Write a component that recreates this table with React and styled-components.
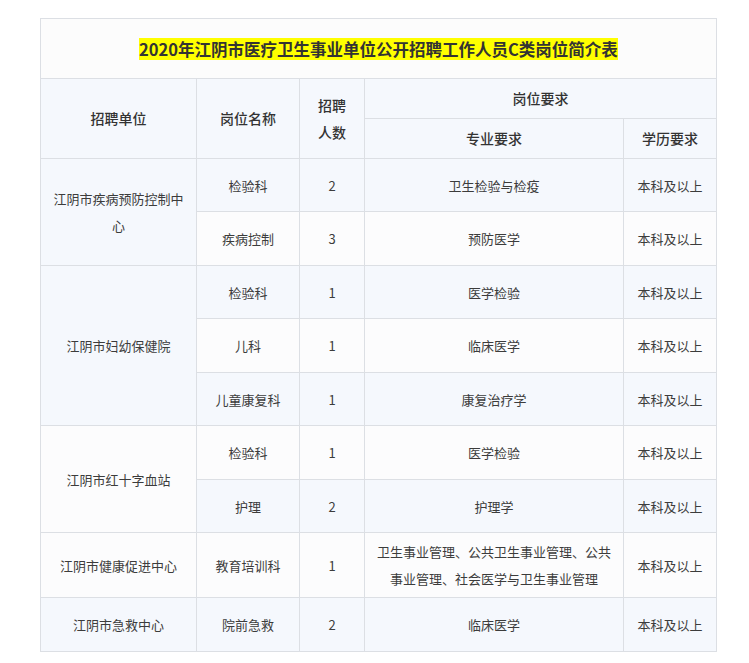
import styled, { createGlobalStyle } from "styled-components";

const GlobalStyle = createGlobalStyle`
  body {
    margin: 0;
    background: #ffffff;
    font-family: "Noto Sans CJK SC", "Noto Sans", sans-serif;
  }
`;

const Page = styled.div`
  padding: 18px 0 0 40px;
`;

const Table = styled.table`
  border-collapse: collapse;
  table-layout: fixed;
  width: 676px;
  border: 1px solid #dcdfe4;
`;

const Row = styled.tr`
  height: ${(p) => p.$h}px;
  background: ${(p) => (p.$blue ? "#f5f8fd" : "#fcfcfd")};
`;

const TitleCell = styled.td`
  height: 59px;
  padding: 0;
  text-align: center;
  background: #fcfcfc;
  border: 1px solid #dcdfe4;
`;

const Highlight = styled.span`
  background: #ffff00;
  color: #333333;
  font-size: 16.5px;
  font-weight: 700;
  line-height: 22px;
  display: inline-block;
  margin-top: 1px;
`;

const Th = styled.td`
  padding: 0 12px;
  text-align: center;
  vertical-align: middle;
  border: 1px solid #dcdfe4;
  background: #f5f8fd;
  color: #333333;
  font-size: 14px;
  font-weight: 500;
  line-height: 27px;
`;

const Td = styled.td`
  padding: 0 10px;
  text-align: center;
  vertical-align: middle;
  border: 1px solid #dcdfe4;
  color: #3c3c3c;
  font-size: 13px;
  line-height: 27px;
`;

const rows = [
  { unit: "江阴市疾病预防控制中心", span: 2, post: "检验科", num: 2, major: "卫生检验与检疫", h: 53 },
  { post: "疾病控制", num: 3, major: "预防医学", h: 54 },
  { unit: "江阴市妇幼保健院", span: 3, post: "检验科", num: 1, major: "医学检验", h: 53 },
  { post: "儿科", num: 1, major: "临床医学", h: 54 },
  { post: "儿童康复科", num: 1, major: "康复治疗学", h: 53 },
  { unit: "江阴市红十字血站", span: 2, post: "检验科", num: 1, major: "医学检验", h: 54 },
  { post: "护理", num: 2, major: "护理学", h: 53 },
  {
    unit: "江阴市健康促进中心",
    span: 1,
    post: "教育培训科",
    num: 1,
    major: "卫生事业管理、公共卫生事业管理、公共事业管理、社会医学与卫生事业管理",
    h: 65,
  },
  { unit: "江阴市急救中心", span: 1, post: "院前急救", num: 2, major: "临床医学", h: 54 },
];

export default function App() {
  return (
    <>
      <GlobalStyle />
      <Page>
        <Table>
          <colgroup>
            <col style={{ width: 156 }} />
            <col style={{ width: 103 }} />
            <col style={{ width: 65 }} />
            <col style={{ width: 259 }} />
            <col style={{ width: 93 }} />
          </colgroup>
          <tbody>
            <tr>
              <TitleCell colSpan={5}>
                <Highlight>2020年江阴市医疗卫生事业单位公开招聘工作人员C类岗位简介表</Highlight>
              </TitleCell>
            </tr>
            <tr style={{ height: 40 }}>
              <Th rowSpan={2}>招聘单位</Th>
              <Th rowSpan={2}>岗位名称</Th>
              <Th rowSpan={2}>招聘人数</Th>
              <Th colSpan={2}>岗位要求</Th>
            </tr>
            <tr style={{ height: 40 }}>
              <Th>专业要求</Th>
              <Th>学历要求</Th>
            </tr>
            {rows.map((r, i) => (
              <Row key={i} $h={r.h} $blue={i % 2 === 0}>
                {r.unit && <Td rowSpan={r.span}>{r.unit}</Td>}
                <Td>{r.post}</Td>
                <Td>{r.num}</Td>
                <Td>{r.major}</Td>
                <Td>本科及以上</Td>
              </Row>
            ))}
          </tbody>
        </Table>
      </Page>
    </>
  );
}
